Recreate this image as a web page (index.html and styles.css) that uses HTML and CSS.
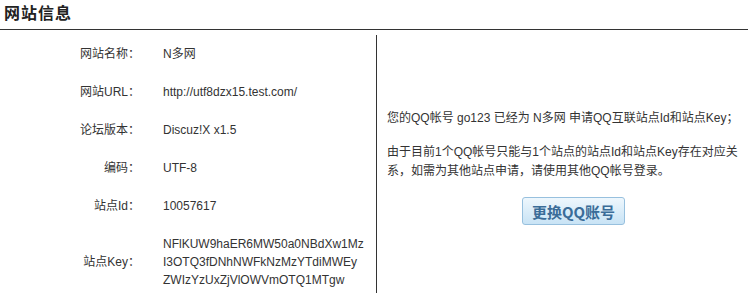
FILE: index.html
```html
<!DOCTYPE html>
<html lang="zh-CN">
<head>
  <meta charset="UTF-8">
  <title>网站信息</title>
  <link rel="stylesheet" href="styles.css">
</head>
<body>

  <!-- 标题 -->
  <h2 class="title">网站信息</h2>

  <div class="info">
    <!-- 左侧：站点资料 -->
    <div class="site-list">
      <div class="row"><span class="label">网站名称：</span><span class="value">N多网</span></div>
      <div class="row"><span class="label">网站URL：</span><span class="value">http://utf8dzx15.test.com/</span></div>
      <div class="row"><span class="label">论坛版本：</span><span class="value">Discuz!X x1.5</span></div>
      <div class="row"><span class="label">编码：</span><span class="value">UTF-8</span></div>
      <div class="row"><span class="label">站点Id：</span><span class="value">10057617</span></div>
      <div class="row"><span class="label">站点Key：</span><span class="value">NFlKUW9haER6MW50a0NBdXw1Mz<br>I3OTQ3fDNhNWFkNzMzYTdiMWEy<br>ZWIzYzUxZjVlOWVmOTQ1MTgw</span></div>
    </div>

    <!-- 右侧：提示 -->
    <div class="notice">
      <p>您的QQ帐号 go123 已经为 N多网 申请QQ互联站点Id和站点Key；</p>
      <p>由于目前1个QQ帐号只能与1个站点的站点Id和站点Key存在对应关系，如需为其他站点申请，请使用其他QQ帐号登录。</p>
      <button class="btn-change">更换QQ账号</button>
    </div>
  </div>

</body>
</html>
```

FILE: styles.css
```css
/* 공통 */
* { box-sizing: border-box; margin:0; padding:0; }
html, body { height:100%; overflow:hidden; }
body {
  font-family: "Liberation Sans", "Noto Sans CJK SC", sans-serif;
  font-size:12px; color:#333; background:#fff;
}

/* 标题 */
.title {
  height:30px; padding-left:4px;
  font-size:16px; line-height:27px; letter-spacing:1px;
  font-weight:bold; color:#222;
  border-bottom:1px solid #333;
}

.info { display:flex; margin-top:5px; }

/* 左侧列表 */
.site-list {
  width:377px; flex-shrink:0;
  border-right:1px solid #333;
}
.row {
  display:grid; grid-template-columns:140px 1fr; column-gap:23px;
  align-items:center; padding:10px 0; line-height:18px;
}
.row .label { text-align:right; }
.row .value { color:#333; }

/* 右侧提示 */
.notice {
  flex:1; display:flex; flex-direction:column; justify-content:center;
  padding:0 0 0 10px; line-height:19px;
}
.notice p { margin-bottom:15px; }
.notice p:last-of-type { margin-bottom:16px; }
.btn-change {
  align-self:flex-start; margin-left:135px;
  width:103px; height:28px;
  font-family: "Noto Sans CJK SC", sans-serif;
  font-size:15px; font-weight:bold; color:#3a6c98;
  background:linear-gradient(#eef7fd, #c8e3f5);
  border:1px solid #97c0de; border-radius:3px;
  cursor:pointer;
}
```
